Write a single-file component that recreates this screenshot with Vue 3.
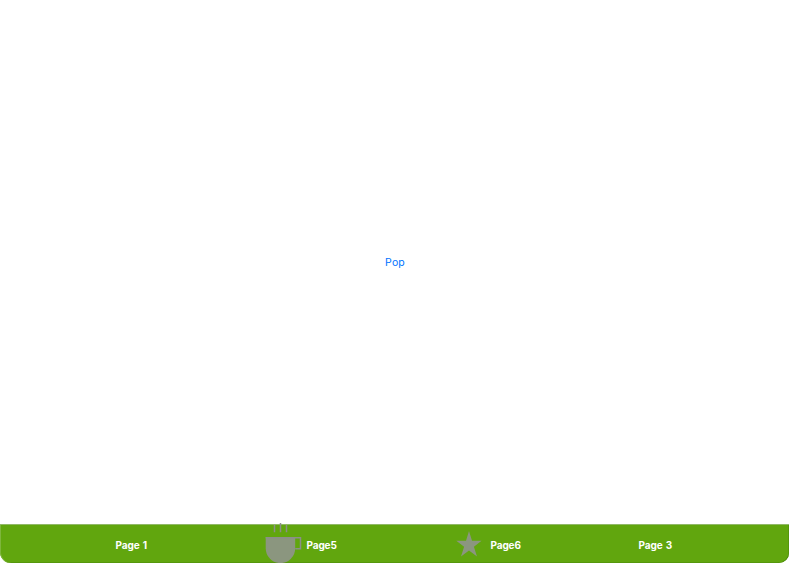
<script setup>
const cupTitle = 'Page5'
</script>

<template>
  <main class="screen">
    <section class="content"><button class="pop">Pop</button></section>
    <nav class="tabs">
      <a class="tab one">Page 1</a>
      <a class="tab cup">
        <svg width="37" height="40" viewBox="0 0 37 40"><path d="M.7 14H30.2V25.2A14.75 14.9 0 0 1 .7 25.2Z" fill="#8b967f"/><path d="M.7 14.7H36M30.2 14.7H35.5V25.7H30.2M9.5 2V9.3M15.5 0V9.3M21.5 2V9.3" fill="none" stroke="#8b8f88" stroke-width="1.5"/></svg>
        <span>{{ cupTitle }}</span>
      </a>
      <a class="tab star">
        <svg width="26" height="26" viewBox="0 0 26 26"><path d="M13 0L16 9.7H25.6L17.9 15.7L21 25.5L13 19.5L5 25.5L8.1 15.7L.3 9.7H10Z" fill="#8b967f"/></svg>
        <span>Page6</span>
      </a>
      <a class="tab three">Page 3</a>
    </nav>
  </main>
</template>

<style>
body { margin: 0; background: #fff; overflow: hidden; }
</style>
<style scoped>
.screen { width: 789px; height: 563px; display: flex; flex-direction: column; font-family: Inter, sans-serif; overflow: hidden; }
.content { height: 524px; display: flex; align-items: center; justify-content: center; }
.pop { border: 0; padding: 0 0 0 1px; background: none; font: 400 10.5px Inter, sans-serif; letter-spacing: .15px; color: #0073ff; }
.tabs { height: 39px; box-sizing: border-box; display: grid; grid-template-columns: 265px 191px 182px 151px; grid-template-rows: 38px; background: #61a60e; border-top: 1px solid #91b967; border-radius: 0 0 10px 11px; box-shadow: inset 1px 0 #7eb63c, inset -.5px -.5px #4b870b; }
.tab { display: flex; align-items: center; color: #fff; font-size: 10px; font-weight: 700; letter-spacing: -.12px; padding-top: 1px; }
.one, .three { letter-spacing: -.1px; word-spacing: .9px; }
.one { padding-left: 115.5px; }
.three { padding-left: .5px; }
.cup { align-items: flex-start; padding-top: 0; }
.cup svg { flex: none; margin: -2px 4.5px 0 0; }
.cup span { padding-top: 14px; }
.star svg { margin: -2px 8.5px 0 0; }
</style>
